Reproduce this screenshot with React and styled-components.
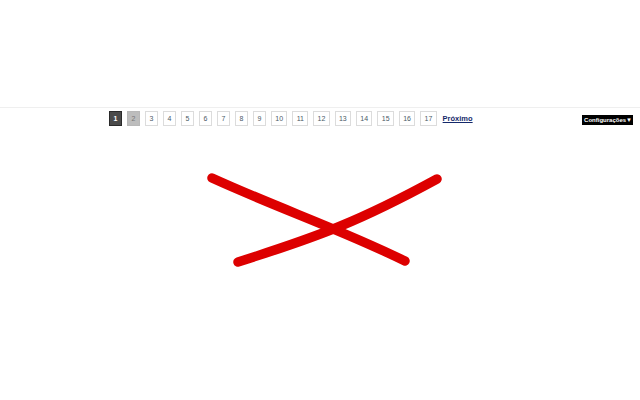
import React from "react";
import styled, { createGlobalStyle } from "styled-components";

const GlobalStyle = createGlobalStyle`
  html, body {
    margin: 0;
    padding: 0;
    background: #fff;
    font-family: "Liberation Sans", Arial, sans-serif;
  }
`;

const PAGES = [1, 2, 3, 4, 5, 6, 7, 8, 9, 10, 11, 12, 13, 14, 15, 16, 17];

export default function App() {
  return (
    <Page>
      <GlobalStyle />
      <Top />
      <Bar>
        <Pager>
          {PAGES.map((n) => (
            <PageBox key={n} $state={n === 1 ? "current" : n === 2 ? "muted" : "normal"}>
              {n}
            </PageBox>
          ))}
          <Next href="#">Próximo</Next>
        </Pager>
        <Settings>Configurações▼</Settings>
      </Bar>
      <Canvas viewBox="0 0 640 170" width="640" height="170">
        <Stroke d="M212 47 C 280 78, 340 98, 405 130" />
        <Stroke d="M238 131 C 320 105, 360 90, 437 48" />
      </Canvas>
    </Page>
  );
}

const Page = styled.div`
  width: 640px;
  height: 400px;
  overflow: hidden;
  background: #fff;
`;

const Top = styled.div`
  height: 107px;
`;

const Bar = styled.div`
  display: flex;
  align-items: flex-start;
  border-top: 1px solid #efefef;
  padding: 3px 7px 0 109px;
  height: 20px;
`;

const Pager = styled.div`
  display: flex;
  align-items: center;
  gap: 5px;
`;

const PageBox = styled.span`
  box-sizing: border-box;
  min-width: 13px;
  height: 15px;
  padding: 0 3.3px;
  display: flex;
  align-items: center;
  justify-content: center;
  font-size: 7px;
  border: 1px solid ${(p) => (p.$state === "current" ? "#2a2a2a" : p.$state === "muted" ? "#b8b8b8" : "#dcdcdc")};
  background: ${(p) => (p.$state === "current" ? "#4a4a4a" : p.$state === "muted" ? "#bdbdbd" : "#fff")};
  color: ${(p) => (p.$state === "current" ? "#fff" : p.$state === "muted" ? "#777" : "#4a5a66")};
  font-weight: ${(p) => (p.$state === "current" ? "bold" : "normal")};
`;

const Next = styled.a`
  margin-left: 1px;
  font-size: 7.5px;
  font-weight: bold;
  color: #14286a;
  text-decoration: underline;
`;

const Settings = styled.span`
  margin-left: auto;
  margin-top: 4px;
  background: #000;
  color: #fff;
  font-size: 6px;
  font-weight: bold;
  height: 10px;
  line-height: 10px;
  padding: 0 1px 0 2px;
  white-space: nowrap;
`;

const Canvas = styled.svg`
  display: block;
`;

const Stroke = styled.path`
  fill: none;
  stroke: #dd0000;
  stroke-width: 9.5;
  stroke-linecap: round;
`;
